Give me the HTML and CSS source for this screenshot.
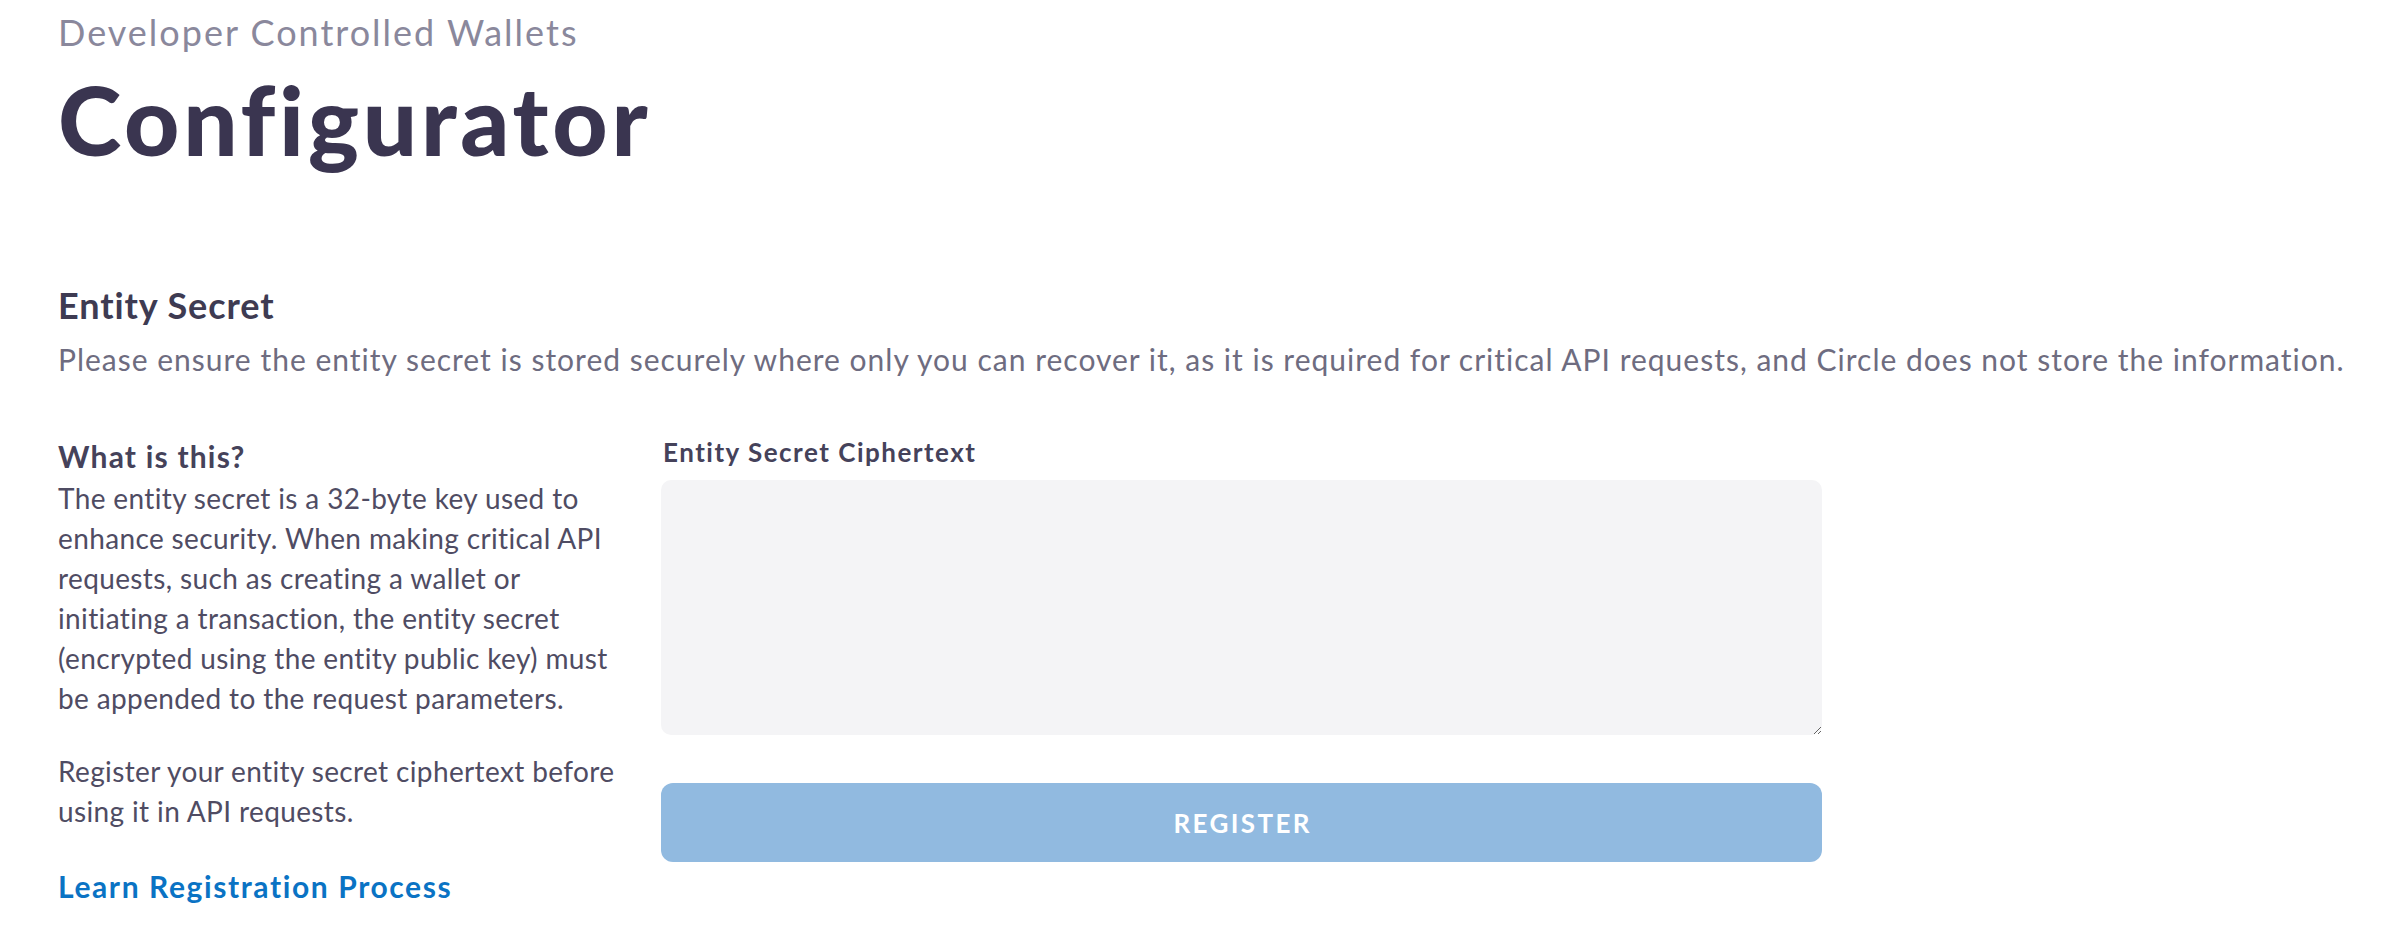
FILE: index.html
```html
<!DOCTYPE html>
<html lang="en">
<head>
<meta charset="utf-8">
<title>Configurator</title>
<link rel="stylesheet" href="styles.css">
</head>
<body>
<main class="page">
  <header class="page-header">
    <p class="eyebrow">Developer Controlled Wallets</p>
    <h1 class="title">Configurator</h1>
  </header>

  <section class="section">
    <h2 class="section-title">Entity Secret</h2>
    <p class="section-desc">Please ensure the entity secret is stored securely where only you can recover it, as it is required for critical API requests, and Circle does not store the information.</p>

    <div class="columns">
      <aside class="info">
        <h3 class="info-title">What is this?</h3>
        <p class="info-text">The entity secret is a 32-byte key used to enhance security. When making critical API requests, such as creating a wallet or initiating a transaction, the entity secret (encrypted using the entity public key) must be appended to the request parameters.</p>
        <p class="info-text info-text-second">Register your entity secret ciphertext before using it in API requests.</p>
        <a class="info-link" href="#">Learn Registration Process</a>
      </aside>

      <form class="form">
        <label class="field-label" for="ciphertext">Entity Secret Ciphertext</label>
        <textarea class="field-input" id="ciphertext"></textarea>
        <button class="submit" type="button" disabled>REGISTER</button>
      </form>
    </div>
  </section>
</main>
</body>
</html>
```

FILE: styles.css
```css
* {
  box-sizing: border-box;
}

html, body {
  margin: 0;
  padding: 0;
  background: #ffffff;
}

body {
  font-family: Lato, "Open Sans", "Liberation Sans", sans-serif;
  color: #3e3b52;
}

.page {
  padding: 11px 20px 0 58px;
}

.page-header {
  display: flex;
  flex-direction: column;
}

.eyebrow {
  margin: 0;
  font-size: 36px;
  line-height: 43px;
  font-weight: 400;
  letter-spacing: 2px;
  color: #8a889c;
}

.title {
  margin: 8.2px 0 0 0;
  font-size: 96px;
  line-height: 114px;
  font-weight: 900;
  letter-spacing: 3.8px;
  color: #3a3550;
}

.section {
  margin-top: 108px;
}

.section-title {
  margin: 0;
  font-size: 36px;
  line-height: 43px;
  font-weight: 700;
  letter-spacing: 0.9px;
  color: #3e3b52;
}

.section-desc {
  margin: 12px 0 0 0;
  font-size: 30px;
  line-height: 40px;
  font-weight: 400;
  letter-spacing: 1px;
  white-space: nowrap;
  color: #6e6c80;
}

.columns {
  margin-top: 56.5px;
  display: grid;
  grid-template-columns: 565px 1161px;
  column-gap: 38px;
  align-items: start;
}

.info {
  display: flex;
  flex-direction: column;
  align-items: flex-start;
}

.info-title {
  margin: 2.5px 0 3.8px 0;
  font-size: 30px;
  line-height: 36px;
  font-weight: 700;
  letter-spacing: 1.2px;
  color: #45425a;
}

.info-text {
  margin: 0;
  font-size: 28px;
  line-height: 40px;
  letter-spacing: 0.37px;
  color: #4f4c63;
}

.info-text-second {
  margin-top: 32.7px;
}

.info-link {
  margin-top: 35.5px;
  font-size: 30px;
  line-height: 40px;
  font-weight: 700;
  letter-spacing: 1.6px;
  color: #0a73c4;
  text-decoration: none;
}

.form {
  display: flex;
  flex-direction: column;
}

.field-label {
  font-size: 26px;
  line-height: 32px;
  font-weight: 700;
  letter-spacing: 1.5px;
  color: #45425a;
  padding-left: 2px;
}

.field-input {
  margin-top: 12.8px;
  height: 255px;
  width: 100%;
  border: none;
  border-radius: 10px;
  background: #f4f4f6;
  padding: 16px;
  font-family: inherit;
  font-size: 24px;
  outline: none;
}

.submit {
  margin-top: 48px;
  height: 79px;
  width: 100%;
  border: none;
  border-radius: 12px;
  background: #91bae0;
  color: #ffffff;
  font-family: inherit;
  font-size: 26px;
  font-weight: 700;
  letter-spacing: 2.4px;
  text-indent: 2.4px;
}
```
